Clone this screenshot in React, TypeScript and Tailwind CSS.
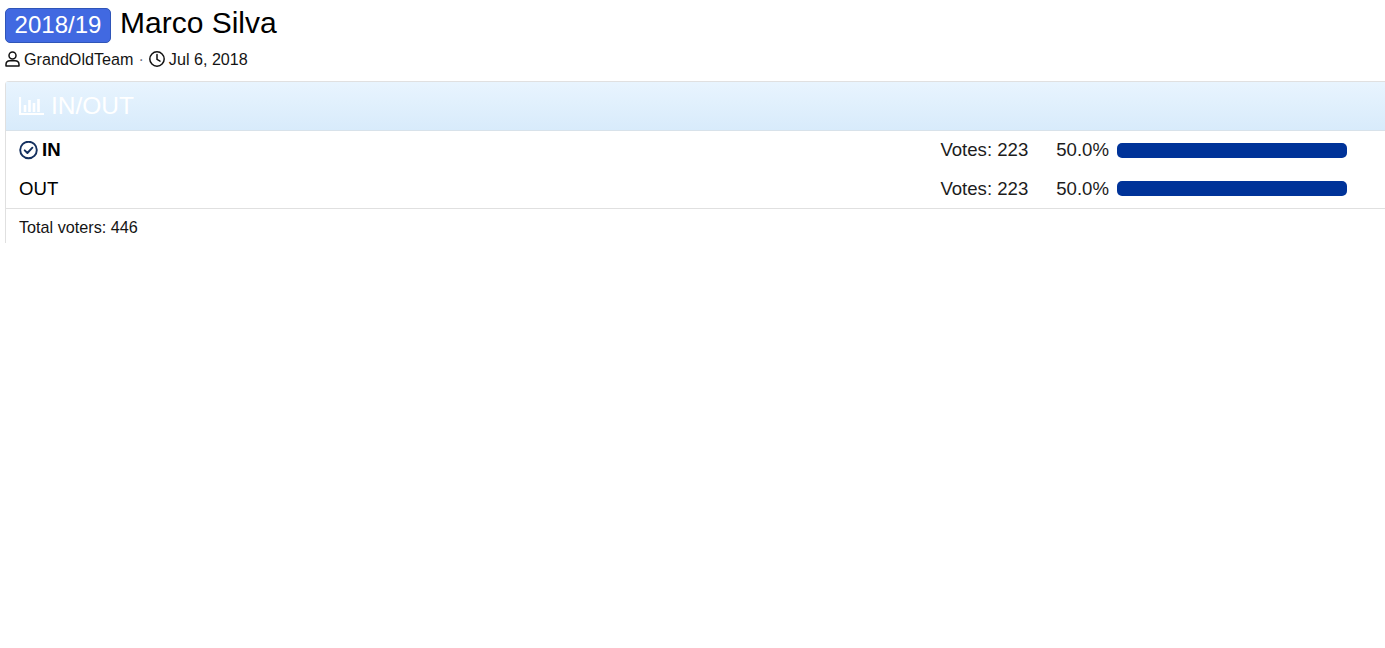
import React from "react";

const RESULTS = [
  { label: "IN", votes: 223, percent: "50.0%", voted: true },
  { label: "OUT", votes: 223, percent: "50.0%", voted: false },
];

const UserIcon = () => (
  <svg width="15" height="16" viewBox="0 0 15 16" fill="none" stroke="#111" strokeWidth="1.5">
    <circle cx="7.500" cy="4.500" r="3.500" />
    <path d="M1 15h13v-1.500c0-2.300-1.800-3.800-4-3.800H5c-2.200 0-4 1.500-4 3.800z" strokeLinejoin="round" />
  </svg>
);

const ClockIcon = () => (
  <svg width="16" height="16" viewBox="0 0 16 16" fill="none" stroke="#111" strokeWidth="1.500">
    <circle cx="8" cy="8" r="7.200" />
    <path d="M8 3.500V8.300l3 1.800" strokeLinecap="round" />
  </svg>
);

const CheckCircle = () => (
  <svg width="19" height="19" viewBox="0 0 19 19" fill="none" stroke="#14305f" strokeWidth="1.900">
    <circle cx="9.500" cy="9" r="8.300" />
    <path d="M5.700 9.300l2.700 2.700 5-5.300" strokeLinecap="round" strokeLinejoin="round" />
  </svg>
);

const BarsIcon = () => (
  <svg width="25" height="18" viewBox="0 0 25 18" fill="none" stroke="#fff" strokeWidth="2.200">
    <path d="M1 0v17h24" />
    <path d="M6 15V8M10.500 15V3M15 15V6M19.500 15V2" strokeWidth="2.600" />
  </svg>
);

export default function App() {
  return (
    <div className="min-h-[648px] bg-white pl-[5px] pt-2 font-['Liberation_Sans',Arial,sans-serif] text-black overflow-hidden">
      <h1 className="flex items-center h-[35px] text-[30px] leading-none font-normal">
        <span className="flex items-center justify-center w-[106px] h-[35px] pb-[2px] mr-[9px] rounded-[5px] border border-[#2f55b8] bg-[#4169e1] text-[24px] text-white">
          2018/19
        </span>
        <span className="pb-[5px]">Marco Silva</span>
      </h1>

      <div className="flex items-center h-[18px] mt-[7px] text-[16.150px] text-[#141414]">
        <UserIcon />
        <span className="ml-1">GrandOldTeam</span>
        <span className="mx-[5px] text-gray-500">·</span>
        <ClockIcon />
        <span className="ml-1">Jul 6, 2018</span>
      </div>

      <div className="mt-[13px] rounded-tl-[4px] border-l border-t border-[#e0e0e0] h-[162px]">
        <div className="flex items-center h-[49px] pl-[13px] border-b border-[#d8e2ea] bg-gradient-to-b from-[#e8f4fe] to-[#d8ebfb] text-[24.500px] text-white">
          <BarsIcon />
          <span className="ml-[7px]">IN/OUT</span>
        </div>

        <div className="border-b border-[#e0e0e0]">
          {RESULTS.map((r) => (
            <div key={r.label} className="flex items-center h-[38.500px] pl-[13px] pr-[38px] text-[18.600px]">
              {r.voted && (
                <span className="mr-1">
                  <CheckCircle />
                </span>
              )}
              <span className={r.voted ? "font-bold" : ""}>{r.label}</span>
              <span className="ml-auto text-[#1c1c1c]">Votes: {r.votes}</span>
              <span className="ml-[28px] text-[#1c1c1c]">{r.percent}</span>
              <div className="ml-2 w-[230px] h-[15px] rounded-[5px] bg-[#003399]" />
            </div>
          ))}
        </div>

        <div className="pl-[13px] pt-[9px] text-[16.200px] leading-[18px] text-[#141414]">Total voters: 446</div>
      </div>
    </div>
  );
}
